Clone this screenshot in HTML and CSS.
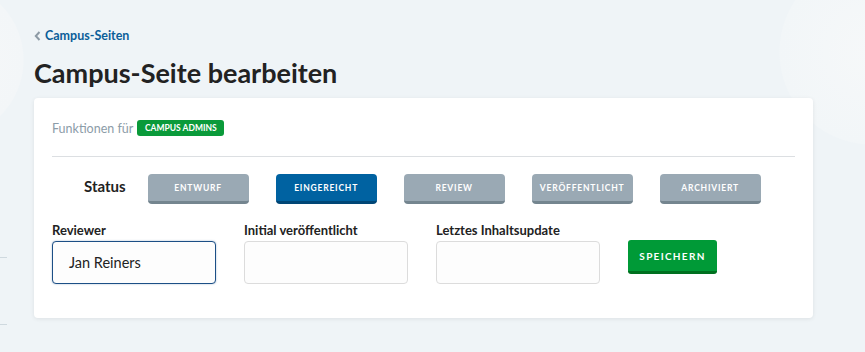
FILE: index.html
```html
<!DOCTYPE html>
<html lang="de">
<head>
    <meta charset="UTF-8">
    <meta name="viewport" content="width=device-width, initial-scale=1.0">
    <title>Campus-Seite bearbeiten</title>
    <link rel="stylesheet" href="styles.css">
</head>
<body>

    <main class="page">
        <a class="breadcrumb" href="#">
            <svg width="7" height="10" viewBox="0 0 7 10">
                <path d="M5.5 1 L1.8 5 L5.5 9" fill="none" stroke="#8d9aa5" stroke-width="2"/>
            </svg>
            Campus-Seiten
        </a>

        <h1>Campus-Seite bearbeiten</h1>

        <section class="card">
            <div class="roles">
                <span>Funktionen für</span>
                <span class="badge">CAMPUS ADMINS</span>
            </div>

            <hr class="divider">

            <div class="status-row">
                <span class="status-label">Status</span>
                <button class="status-btn">ENTWURF</button>
                <button class="status-btn active">EINGEREICHT</button>
                <button class="status-btn">REVIEW</button>
                <button class="status-btn">VERÖFFENTLICHT</button>
                <button class="status-btn">ARCHIVIERT</button>
            </div>

            <div class="fields">
                <div class="field">
                    <label>Reviewer</label>
                    <div class="input focused">Jan Reiners</div>
                </div>
                <div class="field">
                    <label>Initial veröffentlicht</label>
                    <div class="input"></div>
                </div>
                <div class="field">
                    <label>Letztes Inhaltsupdate</label>
                    <div class="input"></div>
                </div>
                <button class="save-btn">SPEICHERN</button>
            </div>
        </section>
    </main>

</body>
</html>
```

FILE: styles.css
```css
* {
    margin: 0;
    padding: 0;
    box-sizing: border-box;
}

html {
    background-color: #eff4f7;
}

body {
    font-family: 'Lato', 'Liberation Sans', sans-serif;
    color: #222;
    width: 865px;
    height: 352px;
    overflow: hidden;
    background:
        radial-gradient(circle at -55px 60px, #f6f8f9 0, #f3f6f8 78px, transparent 79px),
        radial-gradient(circle at 872px 52px, #f6f8f9 0, #f2f6f8 92px, transparent 93px),
        linear-gradient(#cfd9df, #cfd9df) 0 257px / 7px 1px no-repeat,
        linear-gradient(#cfd9df, #cfd9df) 0 324px / 7px 1px no-repeat,
        #eff4f7;
}

.page {
    padding: 28px 0 0 34px;
    width: 813px;
}

.breadcrumb {
    display: flex;
    align-items: center;
    gap: 4px;
    font-size: 12.5px;
    font-weight: 700;
    color: #0b5e99;
    text-decoration: none;
    line-height: 16px;
}

h1 {
    font-size: 27px;
    font-weight: 700;
    color: #222;
    line-height: 32px;
    margin-top: 13px;
}

.card {
    margin-top: 9px;
    background: #fff;
    border-radius: 4px;
    box-shadow: 0 1px 4px rgba(0, 0, 0, 0.08);
    padding: 22px 18px 34px;
}

.roles {
    display: flex;
    align-items: center;
    gap: 4px;
    font-size: 12.5px;
    color: #8c9ca8;
    height: 16px;
}

.badge {
    background: #0a9a3a;
    color: #fff;
    font-size: 8.5px;
    font-weight: 700;
    padding: 4px 7px;
    border-radius: 3px;
    line-height: 8px;
    height: 16px;
    width: 87px;
    text-align: center;
}

.divider {
    border: none;
    border-top: 1px solid #dcdfe2;
    margin-top: 20px;
}

.status-row {
    display: flex;
    align-items: center;
    gap: 27px;
    margin-top: 17px;
    padding-left: 32px;
}

.status-label {
    font-size: 15px;
    font-weight: 700;
    margin-right: -5px;
    margin-bottom: 6px;
}

.status-btn {
    width: 101px;
    height: 30px;
    border: none;
    border-bottom: 3px solid #74858f;
    border-radius: 4px;
    background: #9aa9b4;
    color: #fff;
    font-family: inherit;
    font-size: 8.5px;
    font-weight: 700;
    letter-spacing: 0.8px;
}

.status-btn.active {
    background: #0062a1;
    border-bottom-color: #004676;
}

.fields {
    display: flex;
    align-items: flex-start;
    gap: 28px;
    margin-top: 18px;
}

.field {
    display: flex;
    flex-direction: column;
    gap: 3px;
    width: 164px;
}

.field label {
    font-size: 13px;
    font-weight: 700;
    line-height: 16px;
}

.input {
    height: 43px;
    border: 1px solid #dcdcdc;
    border-radius: 4px;
    background: #fdfdfd;
    font-size: 14.5px;
    display: flex;
    align-items: center;
    padding-left: 16px;
}

.input.focused {
    border-color: #1c4f86;
    box-shadow: 0 0 2px rgba(28, 79, 134, 0.4);
}

.save-btn {
    margin-top: 18px;
    width: 89px;
    height: 34px;
    border: none;
    border-bottom: 3px solid #00701f;
    border-radius: 3px;
    background: #009a37;
    color: #fff;
    font-family: inherit;
    font-size: 10px;
    font-weight: 700;
    letter-spacing: 1.3px;
}
```
